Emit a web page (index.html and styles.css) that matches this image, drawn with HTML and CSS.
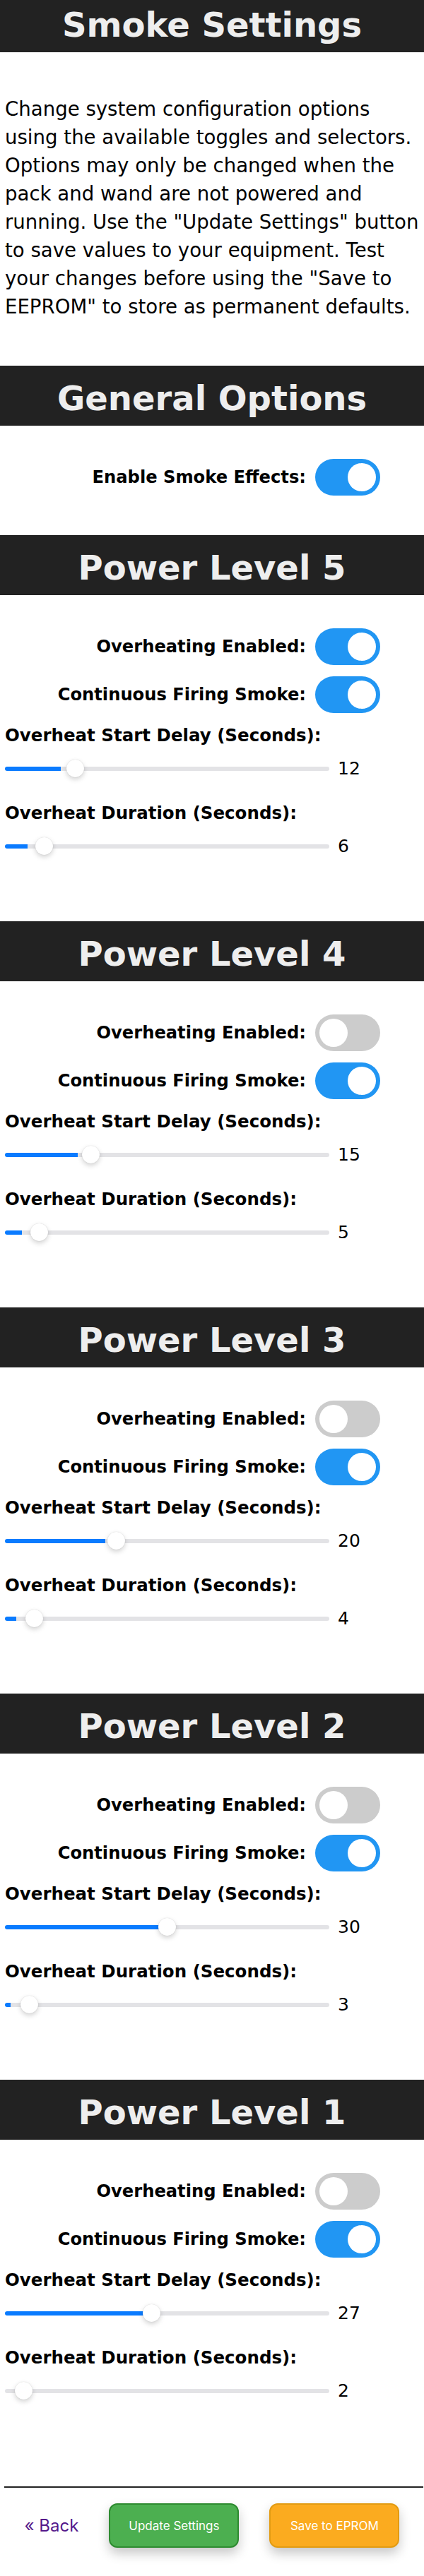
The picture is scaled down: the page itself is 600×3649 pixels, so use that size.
FILE: index.html
```html
<!DOCTYPE html>
<html lang="en">
<head>
<meta charset="utf-8">
<title>Smoke Settings</title>
<link rel="stylesheet" href="styles.css">
</head>
<body>
<h1 class="page-title">Smoke Settings</h1>
<p class="intro">Change system configuration options using the available toggles and selectors. Options may only be changed when the pack and wand are not powered and running. Use the "Update Settings" button to save values to your equipment. Test your changes before using the "Save to EEPROM" to store as permanent defaults.</p>

<section class="group group-general">
  <h2 class="bar">General Options</h2>
  <div class="toggle-row">
    <span class="toggle-label">Enable Smoke Effects:</span>
    <label class="switch"><input type="checkbox" checked><span class="knob"></span></label>
  </div>
</section>

<section class="group group-level">
  <h2 class="bar">Power Level 5</h2>
  <div class="toggle-row">
    <span class="toggle-label">Overheating Enabled:</span>
    <label class="switch"><input type="checkbox" checked><span class="knob"></span></label>
  </div>
  <div class="toggle-row">
    <span class="toggle-label">Continuous Firing Smoke:</span>
    <label class="switch"><input type="checkbox" checked><span class="knob"></span></label>
  </div>
  <div class="field-label">Overheat Start Delay (Seconds):</div>
  <div class="range-row"><input class="range" type="range" min="0" max="60" value="12" style="--fill:17.24%"><span class="range-value">12</span></div>
  <div class="field-label">Overheat Duration (Seconds):</div>
  <div class="range-row"><input class="range" type="range" min="0" max="60" value="6" style="--fill:6.9%"><span class="range-value">6</span></div>
</section>

<section class="group group-level">
  <h2 class="bar">Power Level 4</h2>
  <div class="toggle-row">
    <span class="toggle-label">Overheating Enabled:</span>
    <label class="switch"><input type="checkbox"><span class="knob"></span></label>
  </div>
  <div class="toggle-row">
    <span class="toggle-label">Continuous Firing Smoke:</span>
    <label class="switch"><input type="checkbox" checked><span class="knob"></span></label>
  </div>
  <div class="field-label">Overheat Start Delay (Seconds):</div>
  <div class="range-row"><input class="range" type="range" min="0" max="60" value="15" style="--fill:22.41%"><span class="range-value">15</span></div>
  <div class="field-label">Overheat Duration (Seconds):</div>
  <div class="range-row"><input class="range" type="range" min="0" max="60" value="5" style="--fill:5.17%"><span class="range-value">5</span></div>
</section>

<section class="group group-level">
  <h2 class="bar">Power Level 3</h2>
  <div class="toggle-row">
    <span class="toggle-label">Overheating Enabled:</span>
    <label class="switch"><input type="checkbox"><span class="knob"></span></label>
  </div>
  <div class="toggle-row">
    <span class="toggle-label">Continuous Firing Smoke:</span>
    <label class="switch"><input type="checkbox" checked><span class="knob"></span></label>
  </div>
  <div class="field-label">Overheat Start Delay (Seconds):</div>
  <div class="range-row"><input class="range" type="range" min="0" max="60" value="20" style="--fill:31.03%"><span class="range-value">20</span></div>
  <div class="field-label">Overheat Duration (Seconds):</div>
  <div class="range-row"><input class="range" type="range" min="0" max="60" value="4" style="--fill:3.45%"><span class="range-value">4</span></div>
</section>

<section class="group group-level">
  <h2 class="bar">Power Level 2</h2>
  <div class="toggle-row">
    <span class="toggle-label">Overheating Enabled:</span>
    <label class="switch"><input type="checkbox"><span class="knob"></span></label>
  </div>
  <div class="toggle-row">
    <span class="toggle-label">Continuous Firing Smoke:</span>
    <label class="switch"><input type="checkbox" checked><span class="knob"></span></label>
  </div>
  <div class="field-label">Overheat Start Delay (Seconds):</div>
  <div class="range-row"><input class="range" type="range" min="0" max="60" value="30" style="--fill:48.28%"><span class="range-value">30</span></div>
  <div class="field-label">Overheat Duration (Seconds):</div>
  <div class="range-row"><input class="range" type="range" min="0" max="60" value="3" style="--fill:1.72%"><span class="range-value">3</span></div>
</section>

<section class="group group-level">
  <h2 class="bar">Power Level 1</h2>
  <div class="toggle-row">
    <span class="toggle-label">Overheating Enabled:</span>
    <label class="switch"><input type="checkbox"><span class="knob"></span></label>
  </div>
  <div class="toggle-row">
    <span class="toggle-label">Continuous Firing Smoke:</span>
    <label class="switch"><input type="checkbox" checked><span class="knob"></span></label>
  </div>
  <div class="field-label">Overheat Start Delay (Seconds):</div>
  <div class="range-row"><input class="range" type="range" min="0" max="60" value="27" style="--fill:43.1%"><span class="range-value">27</span></div>
  <div class="field-label">Overheat Duration (Seconds):</div>
  <div class="range-row"><input class="range" type="range" min="0" max="60" value="2" style="--fill:0%"><span class="range-value">2</span></div>
</section>

<hr class="divider">
<div class="actions">
  <a class="back" href="#">&laquo; Back</a>
  <button class="btn btn-update" type="button">Update Settings</button>
  <button class="btn btn-save" type="button">Save to EPROM</button>
</div>
</body>
</html>
```

FILE: styles.css
```css
* { box-sizing: border-box; }

html, body {
  margin: 0;
  padding: 0;
  background: #fff;
}

body {
  width: 600px;
  padding-bottom: 40px;
  font-family: "DejaVu Sans", Verdana, sans-serif;
  color: #000;
}

.page-title {
  margin: 0;
  padding: 7px 0 11px;
  background: #222;
  color: #eee;
  font-size: 48px;
  font-weight: bold;
  line-height: 56px;
  text-align: center;
}

.intro {
  margin: 61px 0 0;
  padding-left: 7px;
  font-size: 27.6px;
  line-height: 40px;
}

.group-general {
  margin-top: 63px;
  padding-bottom: 56px;
}

.group-level {
  padding-bottom: 94px;
}

.bar {
  margin: 0;
  padding: 18px 0 11px;
  background: #222;
  color: #eee;
  font-size: 48px;
  font-weight: bold;
  line-height: 56px;
  text-align: center;
}

.toggle-row {
  display: flex;
  justify-content: flex-end;
  align-items: center;
  gap: 13px;
  margin-top: 16px;
  padding-right: 62px;
}

.bar + .toggle-row { margin-top: 47px; }

.toggle-label {
  font-size: 24.2px;
  font-weight: bold;
  line-height: 28px;
}

.switch {
  position: relative;
  display: block;
  flex: none;
  width: 92px;
  height: 52px;
}

.switch input {
  position: absolute;
  width: 0;
  height: 0;
  margin: 0;
  opacity: 0;
}

.knob {
  position: absolute;
  inset: 0;
  background: #ccc;
  border-radius: 26px;
}

.knob::before {
  content: "";
  position: absolute;
  left: 6px;
  top: 6px;
  width: 40px;
  height: 40px;
  border-radius: 50%;
  background: #fff;
}

.switch input:checked + .knob { background: #2196f3; }
.switch input:checked + .knob::before { transform: translateX(40px); }

.field-label {
  margin: 18px 0 0;
  padding-left: 7px;
  font-size: 24.5px;
  font-weight: bold;
  line-height: 28px;
}

.range-row + .field-label { margin-top: 37px; }

.range-row {
  display: flex;
  align-items: center;
  height: 25px;
  margin-top: 20px;
  padding-left: 7px;
}

.range {
  -webkit-appearance: none;
  appearance: none;
  flex: none;
  width: 459px;
  height: 25px;
  margin: 0;
  padding: 0;
  background: transparent;
}

.range::-webkit-slider-runnable-track {
  height: 6px;
  border-radius: 3px;
  background: linear-gradient(to right, #0a7bff var(--fill), #e3e3e6 var(--fill));
}

.range::-webkit-slider-thumb {
  -webkit-appearance: none;
  appearance: none;
  width: 25px;
  height: 25px;
  margin-top: -9.5px;
  border-radius: 50%;
  background: #fff;
  box-shadow: 0 3px 7px rgba(0, 0, 0, 0.18), 0 0 1px rgba(0, 0, 0, 0.2);
}

.range-value {
  margin-left: 12px;
  font-size: 25px;
  line-height: 28px;
}

.divider {
  height: 2px;
  margin: 29px 1px 0 6px;
  border: none;
  background: #222;
}

.actions {
  display: flex;
  justify-content: center;
  align-items: center;
  gap: 43px;
  margin-top: 22px;
}

.back {
  font-family: Inter, "Liberation Sans", sans-serif;
  font-size: 24px;
  color: #551a8b;
  text-decoration: none;
}

.btn {
  width: 184px;
  height: 63px;
  border: 2px solid;
  border-radius: 12px;
  font-family: Inter, "Liberation Sans", sans-serif;
  font-size: 17px;
  color: #fff;
  box-shadow: 0 8px 16px rgba(0, 0, 0, 0.22);
}

.btn-update {
  background: #4caf50;
  border-color: #2e8b30;
}

.btn-save {
  background: #fbab1f;
  border-color: #e29b12;
}
```
